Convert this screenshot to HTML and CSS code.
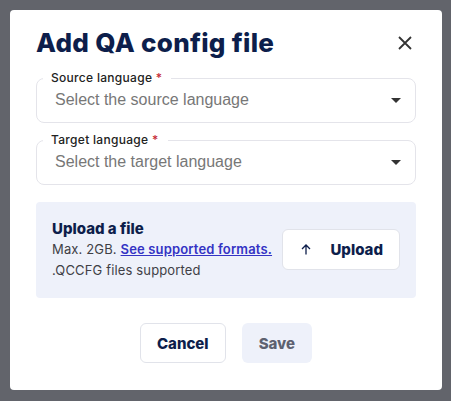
FILE: index.html
```html
<!DOCTYPE html>
<html lang="en">
<head>
    <meta charset="UTF-8">
    <meta name="viewport" content="width=device-width, initial-scale=1.0">
    <title>Add QA config file</title>
    <link rel="stylesheet" href="styles.css">
</head>
<body>
    <div class="dialog">
        <div class="dialog-header">
            <h1>Add QA config file</h1>
            <button class="close-button" aria-label="Close">
                <svg width="14" height="14" viewBox="0 0 14 14">
                    <path d="M1 1 L13 13 M13 1 L1 13" stroke="#333" stroke-width="1.8" fill="none"/>
                </svg>
            </button>
        </div>

        <!-- Language pickers -->
        <fieldset class="picker">
            <legend>Source language <span class="required">*</span></legend>
            <div class="picker-row">
                <span class="placeholder">Select the source language</span>
                <span class="caret"></span>
            </div>
        </fieldset>

        <fieldset class="picker">
            <legend>Target language <span class="required">*</span></legend>
            <div class="picker-row">
                <span class="placeholder">Select the target language</span>
                <span class="caret"></span>
            </div>
        </fieldset>

        <!-- Upload area -->
        <div class="upload-box">
            <div class="upload-info">
                <div class="upload-title">Upload a file</div>
                <div class="upload-text">Max. 2GB. <a href="#">See supported formats.</a></div>
                <div class="upload-text">.QCCFG files supported</div>
            </div>
            <button class="upload-button">
                <svg width="10" height="11" viewBox="0 0 10 11">
                    <path d="M5 10.5 V1 M1 5 L5 1 L9 5" stroke="#0d1e4b" stroke-width="1.3" fill="none"/>
                </svg>
                <span>Upload</span>
            </button>
        </div>

        <div class="dialog-footer">
            <button class="cancel-button">Cancel</button>
            <button class="save-button" disabled>Save</button>
        </div>
    </div>
</body>
</html>
```

FILE: styles.css
```css
body {
    margin: 0;
    padding: 10px 9px 11px 10px;
    background-color: #62646b;
    font-family: Inter, "Liberation Sans", sans-serif;
}

.dialog {
    background-color: #ffffff;
    border-radius: 4px;
    padding: 17px 26px 26px 26px;
    height: 380px;
    box-sizing: border-box;
}

.dialog-header {
    display: flex;
    align-items: center;
    justify-content: space-between;
}

.dialog-header h1 {
    margin: 0;
    font-size: 26px;
    line-height: 32px;
    font-weight: 800;
    color: #0d1e4b;
    letter-spacing: 0.3px;
}

.close-button {
    width: 24px;
    height: 24px;
    padding: 0;
    margin-right: -1px;
    border: none;
    background: none;
    display: flex;
    align-items: center;
    justify-content: center;
    cursor: pointer;
}

/* Select boxes */
.picker {
    margin: 12px 0 0 0;
    padding: 0;
    border: 1px solid #e4e4ea;
    border-radius: 8px;
}

.picker + .picker {
    margin-top: 10px;
}

.picker legend {
    margin-left: 6px;
    padding: 0 9px 0 8px;
    font-size: 12px;
    line-height: 14px;
    font-weight: 500;
    color: #222222;
    letter-spacing: 0.3px;
}

.required {
    color: #c62a36;
}

.picker-row {
    display: flex;
    align-items: center;
    justify-content: space-between;
    padding: 5px 14px 12px 18px;
}

.placeholder {
    font-family: "Liberation Sans", Arial, sans-serif;
    font-size: 16px;
    line-height: 20px;
    color: #777777;
}

.caret {
    width: 0;
    height: 0;
    border-left: 5px solid transparent;
    border-right: 5px solid transparent;
    border-top: 5px solid #333333;
}

/* Upload area */
.upload-box {
    margin-top: 17px;
    padding: 16px 16px 17px 16px;
    background-color: #eef1fa;
    border-radius: 4px;
    display: flex;
    align-items: center;
    justify-content: space-between;
}

.upload-title {
    font-size: 15px;
    line-height: 21px;
    font-weight: 800;
    color: #0d1e4b;
}

.upload-text {
    font-size: 13px;
    line-height: 21px;
    color: #3f3f46;
    letter-spacing: 0.15px;
}

.upload-text a {
    color: #3433c4;
    font-weight: 600;
}

.upload-button {
    display: flex;
    align-items: center;
    gap: 19px;
    height: 41px;
    padding: 0 16px 0 18px;
    background-color: #ffffff;
    border: 1px solid #e1e3ea;
    border-radius: 6px;
    font-family: Inter, "Liberation Sans", sans-serif;
    font-size: 15px;
    font-weight: 800;
    color: #0d1e4b;
    cursor: pointer;
}

/* Footer */
.dialog-footer {
    margin-top: 25px;
    display: flex;
    justify-content: center;
    gap: 16px;
}

.dialog-footer button {
    height: 40px;
    border-radius: 6px;
    font-family: Inter, "Liberation Sans", sans-serif;
    font-size: 15px;
    font-weight: 800;
    cursor: pointer;
}

.cancel-button {
    padding: 0 16px;
    background-color: #ffffff;
    border: 1px solid #e1e3ea;
    color: #0d1e4b;
}

.save-button {
    padding: 0 17px;
    background-color: #eef1fa;
    border: none;
    color: #5d6170;
}
```
